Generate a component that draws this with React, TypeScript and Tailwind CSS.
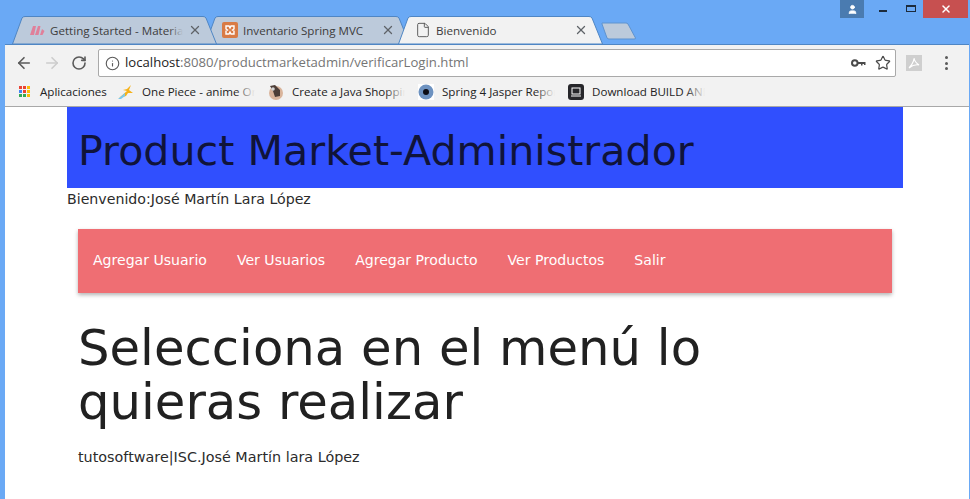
import { ArrowLeft, ArrowRight, RotateCw, Info, Star, X, File, User } from "lucide-react";

const uiFont = "font-['Open_Sans','Noto_Sans',sans-serif]";
const pageFont = "font-['DejaVu_Sans',sans-serif]";

function TabShape({ active }: { active?: boolean }) {
  const fill = active ? "#f2f2f2" : "#bccadb";
  return (
    <svg className="absolute inset-0" width={205} height={28} viewBox="0 0 205 28">
      <path
        d="M0.5 28 L10 2 Q11 0.5 13 0.5 L191 0.5 Q193 0.5 194 2 L204.5 28 Z"
        fill={fill}
        stroke="#4f86c4"
      />
    </svg>
  );
}

function Tab({ label, active, icon, z }: { label: string; active?: boolean; icon: React.ReactNode; z: number }) {
  const fade = active ? "to-[#f2f2f2]" : "to-[#bccadb]";
  return (
    <div className="relative -mr-[12px] h-[28px] w-[205px] shrink-0" style={{ zIndex: z }}>
      <TabShape active={active} />
      <div className="relative flex h-full items-center pl-[17px]">
        <div className="flex w-[16px] shrink-0 justify-center">{icon}</div>
        <div className={`relative ml-[5px] w-[133px] overflow-hidden whitespace-nowrap pt-[1px] text-[11.6px] text-[#3c3c3c] ${uiFont}`}>
          {label}
          <div className={`absolute inset-y-0 right-0 w-[14px] bg-gradient-to-r from-transparent ${fade}`} />
        </div>
        <X className="ml-[5px] text-[#5f6368]" size={14} strokeWidth={2.2} />
      </div>
    </div>
  );
}

function Bookmark({ icon, label }: { icon: React.ReactNode; label: string }) {
  return (
    <div className="flex shrink-0 items-center gap-[8px]">
      <div className="flex h-[16px] w-[16px] items-center justify-center">{icon}</div>
      <div className={`relative w-[113px] overflow-hidden whitespace-nowrap text-[11.6px] text-[#222] ${uiFont}`}>
        {label}
        <div className="absolute inset-y-0 right-0 w-[20px] bg-gradient-to-r from-transparent to-[#f2f2f2]" />
      </div>
    </div>
  );
}

function AppsGrid() {
  const colors = ["#ea4335", "#ea4335", "#fbbc05", "#4285f4", "#ea4335", "#fbbc05", "#34a853", "#34a853", "#fbbc05"];
  return (
    <div className="grid grid-cols-3 gap-[1px]">
      {colors.map((c, i) => (
        <div key={i} className="h-[3px] w-[3px]" style={{ backgroundColor: c }} />
      ))}
    </div>
  );
}

const navItems = ["Agregar Usuario", "Ver Usuarios", "Agregar Producto", "Ver Productos", "Salir"];

export default function App() {
  return (
    <div className="flex h-[499px] w-[970px] flex-col overflow-hidden bg-[#6aa9f5]">
      {/* barra de titulo + tabs */}
      <div className="relative flex h-[44px] shrink-0 items-end pl-[12px]">
        <Tab
          z={2}
          label="Getting Started - Materialize"
          icon={
            <svg width="15" height="9" viewBox="0 0 15 9">
              <path d="M0 9 L3 0 L6 0 L4 9 Z M5 9 L8 0 L10.5 0 L8.5 9 Z M10 9 L12 3 L14.5 5 L12.5 9 Z" fill="#e0809a" />
            </svg>
          }
        />
        <Tab
          z={1}
          label="Inventario Spring MVC"
          icon={
            <svg width="16" height="16" viewBox="0 0 16 16">
              <rect width="16" height="16" rx="2" fill="#d97b45" />
              <path d="M4 4 H7 L8 6 L9 4 H12 V7 L10.5 8 L12 9 V12 H9 L8 10 L7 12 H4 V9 L5.5 8 L4 7 Z" fill="none" stroke="#fff" strokeWidth="1.4" />
            </svg>
          }
        />
        <Tab z={3} active label="Bienvenido" icon={<File className="text-[#555]" size={16} strokeWidth={1.4} />} />
        <svg className="relative z-[1] mb-[4px] ml-[10px] shrink-0" width="36" height="18" viewBox="0 0 36 18">
          <path d="M1 1 H25 Q26 1 27 2 L34.5 16 Q35 17 33 17 H8 Q7 17 6 16 L1 2 Z" fill="#bccadb" stroke="#5f93cf" />
        </svg>

        {/* controles de ventana */}
        <div className="absolute right-[2px] top-0 flex h-[18px] items-start">
          <div className="flex h-[18px] w-[24px] items-center justify-center bg-[#4a7bb0]">
            <User className="fill-white text-white" size={11} />
          </div>
          <div className="flex h-[18px] w-[38px] items-start justify-center pt-[10px]">
            <div className="h-[2px] w-[8px] bg-[#1c2b3c]" />
          </div>
          <div className="ml-[2px] flex h-[12px] w-[13px] items-end justify-center">
            <div className="h-[7px] w-[10px] border border-t-2 border-[#1c2b3c]" />
          </div>
          <div className="ml-[6px] flex h-[18px] w-[45px] items-center justify-center bg-[#c75050]">
            <X className="text-white" size={12} strokeWidth={3} />
          </div>
        </div>
      </div>

      {/* ventana chrome */}
      <div className="ml-[5px] mr-[1px] flex min-h-0 flex-1 flex-col border-t border-[#4f86c4]">
        <div className="flex h-[33px] shrink-0 items-center bg-[#f2f2f2] pl-[10px] pr-[21px] pt-[3px]">
          <ArrowLeft className="text-[#5a5a5a]" size={18} strokeWidth={2.2} />
          <ArrowRight className="ml-[10px] text-[#cdcdcd]" size={18} strokeWidth={2.2} />
          <RotateCw className="ml-[10px] text-[#5a5a5a]" size={16} strokeWidth={2.4} />
          <div className="ml-[11px] flex h-[28px] w-[798px] items-center rounded-[2px] border border-[#a9a9a9] bg-white pl-[6px] pr-[4px]">
            <Info className="text-[#5a5a5a]" size={15} strokeWidth={1.8} />
            <div className={`ml-[5px] whitespace-nowrap text-[13.15px] text-[#757575] ${uiFont}`}>
              <span className="text-[#222]">localhost</span>:8080/productmarketadmin/verificarLogin.html
            </div>
            <svg className="ml-auto" width="15" height="9" viewBox="0 0 15 9">
              <circle cx="3.8" cy="4" r="2.8" fill="none" stroke="#4a4a4a" strokeWidth="2" />
              <path d="M6.5 3 H14.5 V6 H13 V5 H11.5 V6.5 H10 V5 H6.5 Z" fill="#4a4a4a" />
            </svg>
            <Star className="ml-[9px] text-[#4a4a4a]" size={16} strokeWidth={1.8} />
          </div>
          <svg className="ml-[10px] shrink-0" width="16" height="16" viewBox="0 0 16 16">
            <rect width="16" height="16" fill="#cfcfcf" />
            <path d="M3 13 Q6 10 7.5 6 Q8 3 8 3 Q8.5 7 13 10 Q8 9 3 13 Z" fill="none" stroke="#fff" strokeWidth="1.1" />
          </svg>
          <div className="ml-auto flex flex-col gap-[2.5px]">
            <div className="h-[3px] w-[3px] rounded-full bg-[#5a5a5a]" />
            <div className="h-[3px] w-[3px] rounded-full bg-[#5a5a5a]" />
            <div className="h-[3px] w-[3px] rounded-full bg-[#5a5a5a]" />
          </div>
        </div>

        <div className="flex h-[29px] shrink-0 items-center border-b border-[#a8a8a8] bg-[#f2f2f2] pl-[12px]">
          <div className="flex shrink-0 items-center gap-[9px]">
            <div className="flex w-[14px] justify-center">
              <AppsGrid />
            </div>
            <div className={`w-[66px] whitespace-nowrap text-[11.6px] text-[#222] ${uiFont}`}>Aplicaciones</div>
          </div>
          <div className="ml-[12px] flex gap-[13px]">
            <Bookmark
              label="One Piece - anime Online"
              icon={
                <svg width="16" height="16" viewBox="0 0 16 16">
                  <path d="M1 14 L9 7 L5 6 L9 5 L13 1 L11 6 L15 9 L10 9 L8 12 Z" fill="#f5b21a" />
                  <path d="M0 15 L7 9 L7 12 L3 15 Z" fill="#79c8ef" />
                </svg>
              }
            />
            <Bookmark
              label="Create a Java Shopping Cart"
              icon={
                <svg width="16" height="16" viewBox="0 0 16 16">
                  <circle cx="8" cy="9" r="7" fill="#d9b49b" />
                  <path d="M2 2 L7 1 L12 6 L12 12 L7 13 L5 7 Z" fill="#4d3e37" />
                  <circle cx="5" cy="5" r="1.8" fill="#d5d5d5" />
                </svg>
              }
            />
            <Bookmark
              label="Spring 4 Jasper Reports"
              icon={
                <svg width="16" height="16" viewBox="0 0 16 16">
                  <rect width="16" height="16" fill="#fff" />
                  <circle cx="8" cy="8" r="7.5" fill="#6d92c0" />
                  <circle cx="8" cy="8" r="3" fill="#0c0c14" />
                </svg>
              }
            />
            <Bookmark
              label="Download BUILD AND"
              icon={
                <svg width="16" height="16" viewBox="0 0 16 16">
                  <rect width="16" height="16" rx="3" fill="#26262a" />
                  <rect x="4" y="4" width="8" height="6" fill="none" stroke="#fff" />
                  <path d="M3 12 H13" stroke="#fff" />
                </svg>
              }
            />
          </div>
        </div>

        {/* pagina */}
        <div className={`min-h-0 flex-1 bg-white pl-[62px] pr-[66px] text-[#2b2b2b] ${pageFont}`}>
          <div className="flex h-[81px] items-center bg-[#304ffe] pl-[11px] pt-[8px]">
            <div className="whitespace-nowrap text-[41.2px] leading-none text-[#10143a]">Product Market-Administrador</div>
          </div>
          <div className="mt-[1px] text-[14.17px] leading-[20px]">Bienvenido:José Martín Lara López</div>
          <div className="mx-[11px] mt-[20px] flex h-[64px] items-center bg-[#ef6e73] pl-[15px] text-[14.07px] text-white shadow-[0_2px_4px_rgba(0,0,0,0.3)]">
            {navItems.map((item) => (
              <div key={item} className="mr-[30px] whitespace-nowrap">
                {item}
              </div>
            ))}
          </div>
          <div className="mx-[11px] mt-[28px] text-[49.7px] leading-[54px] text-[#212121]">
            Selecciona en el menú lo
            <br />
            quieras realizar
          </div>
          <div className="mx-[11px] mt-[18px] text-[14.35px] leading-[20px]">tutosoftware|ISC.José Martín lara López</div>
        </div>
      </div>
    </div>
  );
}
